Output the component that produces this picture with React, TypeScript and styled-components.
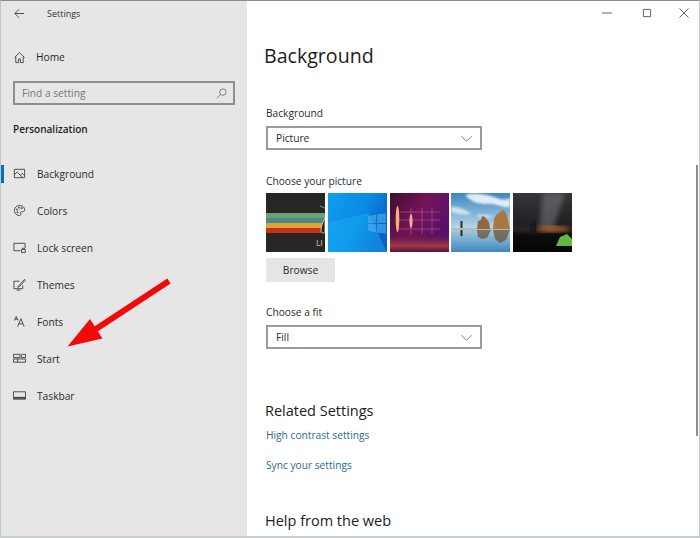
import React from "react";
import styled, { createGlobalStyle } from "styled-components";

const GlobalStyle = createGlobalStyle`
  html, body {
    margin: 0;
    padding: 0;
    background: #fff;
  }
  body {
    font-family: "Open Sans", "Noto Sans", sans-serif;
    color: #1f1f1f;
  }
`;

const Window = styled.div`
  position: relative;
  display: flex;
  width: 700px;
  height: 538px;
  box-sizing: border-box;
  overflow: hidden;
  background: #fff;
  border-top: 1px solid #8a8a8a;
  border-left: 1px solid #b9c9cc;
  border-right: 1px solid #c4c9cc;
  border-bottom: 2px solid #c8cdd0;
`;

const Sidebar = styled.aside`
  display: flex;
  flex-direction: column;
  flex: 0 0 246px;
  background: #e6e6e6;
`;

const TitleBar = styled.div`
  display: flex;
  align-items: center;
  height: 25px;
  padding-left: 12px;
  font-size: 9px;
  color: #333;
`;

const TitleText = styled.span`
  margin-left: 21px;
`;

const HomeRow = styled.div`
  display: flex;
  align-items: center;
  gap: 10px;
  height: 24px;
  margin-top: 19px;
  padding-left: 12px;
  font-size: 10.2px;
`;

const SearchBox = styled.div`
  display: flex;
  align-items: center;
  justify-content: space-between;
  box-sizing: border-box;
  width: 222px;
  height: 24px;
  margin: 12px 0 0 12px;
  padding: 0 5px 0 7px;
  border: 2px solid #8e8e8e;
  font-size: 10.2px;
  color: #777;
`;

const SectionTitle = styled.div`
  margin: 14px 0 0 12px;
  height: 20px;
  line-height: 20px;
  font-size: 10px;
  font-weight: 600;
  color: #222;
`;

const NavList = styled.nav`
  display: flex;
  flex-direction: column;
  margin-top: 16px;
`;

const NavRow = styled.div<{ $active?: boolean }>`
  display: flex;
  align-items: center;
  gap: 11px;
  height: 37px;
  padding-left: 12px;
  font-size: 10.2px;
  color: #2b2b2b;
  background: ${(p) =>
    p.$active
      ? "linear-gradient(#0a6cbc, #0a6cbc) left center / 3px 18px no-repeat"
      : "none"};
`;

const Main = styled.main`
  flex: 1;
  display: flex;
  flex-direction: column;
  align-items: flex-start;
  padding-left: 19px;
  overflow: hidden;
`;

const WindowControls = styled.div`
  display: flex;
  align-self: flex-end;
  align-items: center;
  gap: 27px;
  height: 23px;
  margin-bottom: 2px;
  padding-right: 10px;

  & > :first-child {
    margin-right: 3px;
  }
`;

const PageTitle = styled.h1`
  margin: 14px 0 0 -2px;
  height: 32px;
  line-height: 32px;
  font-size: 19.6px;
  font-weight: 400;
  color: #1c1c1c;
`;

const Label = styled.div<{ $top: number }>`
  margin-top: ${(p) => p.$top}px;
  height: 14px;
  line-height: 14px;
  font-size: 10.2px;
  color: #2b2b2b;
`;

const Select = styled.div<{ $top?: number }>`
  display: flex;
  align-items: center;
  justify-content: space-between;
  box-sizing: border-box;
  width: 216px;
  height: 24px;
  margin-top: ${(p) => p.$top ?? 6}px;
  padding: 0 7px 0 8px;
  border: 2px solid #9a9a9a;
  font-size: 10.2px;
  color: #2b2b2b;
`;

const Thumbs = styled.div`
  display: flex;
  gap: 2.75px;
  margin-top: 5px;
`;

const Thumb = styled.svg`
  display: block;
  width: 59px;
  height: 59px;
`;

const BrowseButton = styled.div`
  display: flex;
  align-items: center;
  justify-content: center;
  width: 69px;
  height: 24px;
  margin-top: 6px;
  background: #e5e5e5;
  font-size: 10.2px;
  color: #2b2b2b;
`;

const SubHeading = styled.h2<{ $top: number }>`
  margin: ${(p) => p.$top}px 0 0 -1px;
  height: 20px;
  line-height: 20px;
  font-size: 14.5px;
  font-weight: 400;
  color: #1c1c1c;
`;

const SettingLink = styled.a<{ $top: number }>`
  display: block;
  margin-top: ${(p) => p.$top}px;
  height: 14px;
  line-height: 14px;
  font-size: 10.2px;
  color: #2a6a92;
`;

const ScrollThumb = styled.div`
  position: absolute;
  top: 164px;
  right: 1px;
  width: 2px;
  height: 271px;
  background: #8f8f8f;
`;

const ArrowOverlay = styled.svg`
  position: absolute;
  left: 59px;
  top: 272px;
  width: 118px;
  height: 82px;
  pointer-events: none;
`;

const Glyph = styled.svg`
  display: block;
  flex: none;
  width: 13px;
  height: 13px;
  fill: none;
  stroke: #444;
  stroke-width: 1;
`;

const ControlGlyph = styled(Glyph)`
  width: 10px;
  height: 10px;
  stroke: #555;
`;

const FaintGlyph = styled(Glyph)`
  stroke: #777;
`;

const BackIcon = () => (
  <Glyph viewBox="0 0 14 14">
    <path d="M12 7H2M6.5 2.5L2 7l4.5 4.5" />
  </Glyph>
);

const HomeIcon = () => (
  <Glyph viewBox="0 0 14 14">
    <path d="M1.5 7.2L7 1.8l5.5 5.4M3 6v6.5h3V8.5h2v4h3V6" />
  </Glyph>
);

const SearchIcon = () => (
  <FaintGlyph viewBox="0 0 14 14">
    <circle cx="8.5" cy="5.5" r="3.5" />
    <path d="M6 8l-4 4" />
  </FaintGlyph>
);

const ChevronIcon = () => (
  <FaintGlyph viewBox="0 0 14 14">
    <path d="M1.5 4.5l5.5 5.5 5.5-5.5" />
  </FaintGlyph>
);

const PictureIcon = () => (
  <Glyph viewBox="0 0 14 14">
    <path d="M1.5 2.5h11v9h-11zM1.5 8l3-2.5 6 6M8 8.5l2-1.5 2.5 2" />
  </Glyph>
);

const PaletteIcon = () => (
  <Glyph viewBox="0 0 14 14">
    <path d="M7 1.5c3.2 0 5.5 2 5.5 4.6 0 2-1.6 2.6-3 2.4-1.2-.2-1.8.7-1.2 1.7.6 1.2-.1 2.3-1.6 2.3-2.6 0-5.2-2.4-5.2-5.5C1.5 3.8 4 1.5 7 1.5z" />
    <circle cx="4.3" cy="6" r=".7" />
    <circle cx="6.5" cy="3.9" r=".7" />
    <circle cx="9.3" cy="4.5" r=".7" />
    <circle cx="4.8" cy="9" r=".7" />
  </Glyph>
);

const LockScreenIcon = () => (
  <Glyph viewBox="0 0 14 14">
    <path d="M8 10.5H1v-8h12v5" />
    <path d="M9.2 9h4v3.5h-4zM10.2 9V7.8h2V9" />
  </Glyph>
);

const ThemesIcon = () => (
  <Glyph viewBox="0 0 14 14">
    <path d="M7 3.5H1v8h9.5V8M4 13h4" />
    <path d="M12.5 1.5L6.5 8 5 10l2.2-1L13.2 2.5z" />
  </Glyph>
);

const FontsIcon = () => (
  <Glyph viewBox="0 0 14 14">
    <path d="M1.5 6l2-4.5L5.5 6M2.2 4.5h2.6M5 12.5L8.5 4l3.5 8.5M6.2 9.5h4.6" />
  </Glyph>
);

const StartIcon = () => (
  <Glyph viewBox="0 0 14 14">
    <path d="M.5 2.5h7v3.5h-7zM9 2.5h4.5v3.5H9zM.5 7.5h13v3.5H.5zM5 7.5V11" />
  </Glyph>
);

const TaskbarIcon = () => (
  <Glyph viewBox="0 0 14 14">
    <path d="M.5 3h13v8H.5z" />
    <path d="M.5 9.5h13" strokeWidth="2" />
  </Glyph>
);

const RetroThumb = () => (
  <Thumb viewBox="0 0 59 59">
    <rect width="59" height="59" fill="#272625" />
    <rect y="20" width="59" height="5" fill="#6c9f78" />
    <rect y="25" width="59" height="5" fill="#4c8a84" />
    <rect y="30" width="59" height="5" fill="#e0a233" />
    <rect y="35" width="59" height="5" fill="#c4321d" />
    <path d="M59 25c-2 3-4 9-4 13 0 2 2 3 4 1z" fill="#241f1d" stroke="#e8e0d8" strokeWidth=".8" />
    <path d="M54 13l5 2" stroke="#ccc" strokeWidth=".6" />
    <text x="50" y="53" fontSize="8" fontWeight="600" fill="#a9a9a9" fontFamily="Open Sans">LI</text>
  </Thumb>
);

const WindowsThumb = () => (
  <Thumb viewBox="0 0 59 59">
    <defs>
      <linearGradient id="winBg" x1="0" y1="0" x2="1" y2="0.5">
        <stop offset="0" stopColor="#0f9ff0" />
        <stop offset="0.6" stopColor="#0a8ae4" />
        <stop offset="1" stopColor="#0a60c6" />
      </linearGradient>
    </defs>
    <rect width="59" height="59" fill="url(#winBg)" />
    <path d="M0 59V30L40 20 59 59z" fill="#19b2f5" opacity=".45" />
    <path d="M40 23l8-1.2V30h-8zM49 21.6l9-1.3V30h-9zM40 31h8v8.2L40 38zM49 31h9v9.7l-9-1.3z" fill="#4fb2f0" opacity=".6" />
  </Thumb>
);

const PurpleThumb = () => (
  <Thumb viewBox="0 0 59 59">
    <defs>
      <linearGradient id="purpleBg" x1="0" y1="0" x2="1" y2="0.6">
        <stop offset="0" stopColor="#3d0f2e" />
        <stop offset="0.5" stopColor="#741358" />
        <stop offset="1" stopColor="#560f6e" />
      </linearGradient>
      <linearGradient id="purpleFloor" x1="0" y1="0" x2="0" y2="1">
        <stop offset="0" stopColor="#5a1440" stopOpacity="0" />
        <stop offset="0.65" stopColor="#a03a4a" />
        <stop offset="1" stopColor="#5e1238" />
      </linearGradient>
      <filter id="purpleSoft">
        <feGaussianBlur stdDeviation=".7" />
      </filter>
    </defs>
    <rect width="59" height="59" fill="url(#purpleBg)" />
    <rect y="40" width="59" height="19" fill="url(#purpleFloor)" />
    <g stroke="#d9848a" strokeWidth=".6" opacity=".7">
      <path d="M8 19h42M8 27h42M8 36h42M21 15v26M32 15v26M42 15v26" />
    </g>
    <ellipse cx="7.5" cy="26" rx="1.8" ry="13" fill="#f6b080" filter="url(#purpleSoft)" />
    <ellipse cx="21" cy="28" rx="1.6" ry="7" fill="#f2a89c" filter="url(#purpleSoft)" />
  </Thumb>
);

const BeachThumb = () => (
  <Thumb viewBox="0 0 59 59">
    <defs>
      <linearGradient id="beachSky" x1="0" y1="0" x2="0" y2="1">
        <stop offset="0" stopColor="#3a86c2" />
        <stop offset="1" stopColor="#bcd8e8" />
      </linearGradient>
      <linearGradient id="beachSea" x1="0" y1="0" x2="0" y2="1">
        <stop offset="0" stopColor="#a9cbe0" />
        <stop offset="1" stopColor="#3f88c0" />
      </linearGradient>
      <filter id="beachSoft">
        <feGaussianBlur stdDeviation="1" />
      </filter>
      <filter id="beachRock">
        <feGaussianBlur stdDeviation=".4" />
      </filter>
    </defs>
    <rect width="59" height="36" fill="url(#beachSky)" />
    <g filter="url(#beachSoft)">
      <path d="M14 2c10-3 24 0 32 3 5 2 9 2 13 0v9c-9 1-14-4-24-3-8 0-15-2-21-9z" fill="#f2f5f7" opacity=".9" />
      <path d="M0 14c6-1 14 2 20 7-8 1-15 0-20-2z" fill="#eef3f6" opacity=".75" />
      <path d="M26 22c8-1 13 0 16 2-6 1-12 1-16 0z" fill="#eef3f6" opacity=".6" />
    </g>
    <rect y="36" width="59" height="23" fill="url(#beachSea)" />
    <g filter="url(#beachRock)">
      <path d="M0 35h59v2H0z" fill="#b9b49c" opacity=".7" />
      <path d="M26 36l1-8 3-1 1-4 3 1 2 3 2 2 1 7z" fill="#8e6a3c" />
      <path d="M42 36l1-10 3-5 3-2 3-2 3 3 2 6 2 10z" fill="#a9773f" />
      <path d="M26 37l1 7 4 2 5-1 4-8zM42 37l2 9 5 4 6-3 4-10z" fill="#6d5434" opacity=".75" />
      <path d="M9.5 28h2v7h-2zM9.5 37h2v6h-2z" fill="#2b2f33" />
    </g>
  </Thumb>
);

const NightThumb = () => (
  <Thumb viewBox="0 0 59 59">
    <defs>
      <linearGradient id="nightSky" x1="0" y1="0" x2="0" y2="1">
        <stop offset="0" stopColor="#35373b" />
        <stop offset="0.5" stopColor="#1f2023" />
        <stop offset="0.62" stopColor="#2a2320" />
        <stop offset="0.72" stopColor="#0c0c0c" />
        <stop offset="1" stopColor="#050505" />
      </linearGradient>
      <filter id="nightSoft">
        <feGaussianBlur stdDeviation="2.5" />
      </filter>
      <filter id="tentSoft">
        <feGaussianBlur stdDeviation=".6" />
      </filter>
    </defs>
    <rect width="59" height="59" fill="url(#nightSky)" />
    <path d="M30 0h22L40 36 26 36z" fill="#8a8c90" opacity=".45" filter="url(#nightSoft)" />
    <ellipse cx="40" cy="36" rx="16" ry="3" fill="#c26a28" opacity=".85" filter="url(#nightSoft)" />
    <path d="M17 40v-9h3v9zM21 40v-11h2v11z" fill="#17171a" />
    <path d="M43 53l4-9 7-3 5 5v7z" fill="#64b83c" filter="url(#tentSoft)" />
  </Thumb>
);

const navItems = [
  { label: "Background", icon: <PictureIcon />, active: true },
  { label: "Colors", icon: <PaletteIcon /> },
  { label: "Lock screen", icon: <LockScreenIcon /> },
  { label: "Themes", icon: <ThemesIcon /> },
  { label: "Fonts", icon: <FontsIcon /> },
  { label: "Start", icon: <StartIcon /> },
  { label: "Taskbar", icon: <TaskbarIcon /> },
];

const App: React.FC = () => {
  return (
    <Window>
      <GlobalStyle />
      <Sidebar>
        <TitleBar>
          <BackIcon />
          <TitleText>Settings</TitleText>
        </TitleBar>
        <HomeRow>
          <HomeIcon />
          Home
        </HomeRow>
        <SearchBox>
          Find a setting
          <SearchIcon />
        </SearchBox>
        <SectionTitle>Personalization</SectionTitle>
        <NavList>
          {navItems.map((item) => (
            <NavRow key={item.label} $active={item.active}>
              {item.icon}
              {item.label}
            </NavRow>
          ))}
        </NavList>
      </Sidebar>
      <Main>
        <WindowControls>
          <ControlGlyph viewBox="0 0 11 11">
            <path d="M0 5.5h11" />
          </ControlGlyph>
          <ControlGlyph viewBox="0 0 11 11">
            <path d="M1.5 1.5h8v8h-8z" />
          </ControlGlyph>
          <ControlGlyph viewBox="0 0 11 11">
            <path d="M.5.5l10 10M10.5.5l-10 10" />
          </ControlGlyph>
        </WindowControls>
        <PageTitle>Background</PageTitle>
        <Label $top={34}>Background</Label>
        <Select>
          Picture
          <ChevronIcon />
        </Select>
        <Label $top={24}>Choose your picture</Label>
        <Thumbs>
          <RetroThumb />
          <WindowsThumb />
          <PurpleThumb />
          <BeachThumb />
          <NightThumb />
        </Thumbs>
        <BrowseButton>Browse</BrowseButton>
        <Label $top={23}>Choose a fit</Label>
        <Select>
          Fill
          <ChevronIcon />
        </Select>
        <SubHeading $top={52}>Related Settings</SubHeading>
        <SettingLink $top={7}>High contrast settings</SettingLink>
        <SettingLink $top={16}>Sync your settings</SettingLink>
        <SubHeading $top={39}>Help from the web</SubHeading>
      </Main>
      <ScrollThumb />
      <ArrowOverlay viewBox="0 0 118 82">
        <path d="M109 8L36 56" stroke="#f00a0a" strokeWidth="6" />
        <path d="M7.5 73.5L30 46 42.5 65.5z" fill="#f00a0a" />
      </ArrowOverlay>
    </Window>
  );
};

export default App;
